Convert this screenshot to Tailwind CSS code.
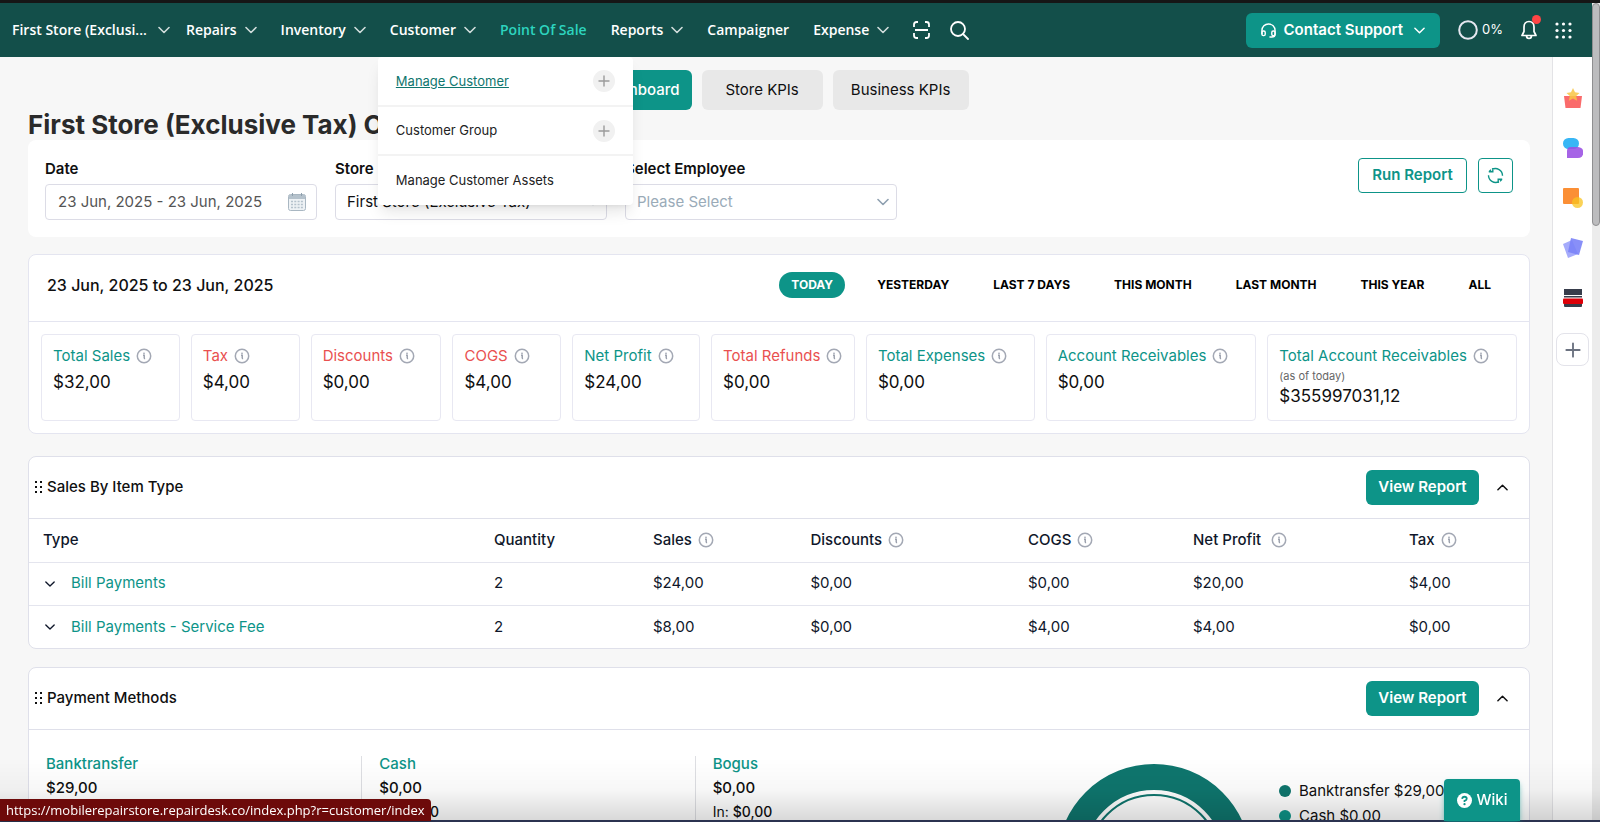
<!DOCTYPE html>
<html lang="en">
<head>
  <meta charset="UTF-8" />
  <meta name="viewport" content="width=device-width, initial-scale=1.0" />
  <title>RepairDesk Dashboard</title>
  <script src="https://cdn.jsdelivr.net/npm/@tailwindcss/browser@4"></script>
</head>
<body class="h-screen overflow-hidden bg-[#f7f7f7] font-['Inter',sans-serif] text-[15px] text-[#0f0f10]">
  <!-- shared icons -->
  <svg class="hidden">
    <symbol id="chev" viewBox="0 0 12 12"><path d="M1 3.5 6 8.5l5-5" fill="none" stroke="currentColor" stroke-width="1.6" stroke-linecap="round" stroke-linejoin="round" /></symbol>
    <symbol id="info" viewBox="0 0 16 16"><circle cx="8" cy="8" r="6.7" fill="none" stroke="#a3a8b4" stroke-width="1.5" /><path d="M7 7.2h1.2v3.4M8.2 10.6h.9" fill="none" stroke="#8f95a3" stroke-width="1.3" /><circle cx="8" cy="5.2" r=".8" fill="#8f95a3" /></symbol>
    <symbol id="plus" viewBox="0 0 12 12"><path d="M6 1v10M1 6h10" fill="none" stroke="currentColor" stroke-width="1.4" stroke-linecap="round" /></symbol>
    <symbol id="grip" viewBox="0 0 8 14"><g fill="#111"><rect x="0" y="0" width="2" height="2" /><rect x="5" y="0" width="2" height="2" /><rect x="0" y="5" width="2" height="2" /><rect x="5" y="5" width="2" height="2" /><rect x="0" y="10" width="2" height="2" /><rect x="5" y="10" width="2" height="2" /></g></symbol>
  </svg>

  <div class="flex h-screen flex-col border-t-3 border-[#161616]">
    <div class="flex min-h-0 flex-1">
      <div class="flex min-w-0 flex-1 flex-col">

        <!-- top bar -->
        <header class="relative z-20 flex h-[54px] shrink-0 items-center justify-between bg-[#134f4a] pr-5 pl-3 text-white">
          <nav class="flex items-center gap-6 font-['Open_Sans',sans-serif] text-sm font-semibold">
            <button class="flex w-[158px] items-center justify-between">First Store (Exclusi...<svg class="size-3 text-white/80"><use href="#chev" /></svg></button>
            <button class="-ml-2 flex items-center gap-2">Repairs<svg class="size-3 text-white/80"><use href="#chev" /></svg></button>
            <button class="flex items-center gap-2">Inventory<svg class="size-3 text-white/80"><use href="#chev" /></svg></button>
            <div class="relative">
              <button class="flex items-center gap-2">Customer<svg class="size-3 text-white/80"><use href="#chev" /></svg></button>
              <!-- customer menu -->
              <ul class="absolute top-[37px] -left-3 w-[255px] divide-y-2 divide-[#f3f3f3] rounded-sm bg-white font-['Inter',sans-serif] text-[13px] font-normal text-[#222] shadow-lg">
                <li class="flex h-[50px] items-center justify-between px-[18px]"><a href="#" class="text-[#0f766e] underline">Manage Customer</a><button aria-label="Add customer" class="flex size-[22px] items-center justify-center rounded-full bg-[#f1f1f1] text-[#9b9b9b]"><svg class="size-3"><use href="#plus" /></svg></button></li>
                <li class="flex h-[49px] items-center justify-between px-[18px]"><a href="#">Customer Group</a><button aria-label="Add customer group" class="flex size-[22px] items-center justify-center rounded-full bg-[#f1f1f1] text-[#9b9b9b]"><svg class="size-3"><use href="#plus" /></svg></button></li>
                <li class="flex h-[49px] items-center px-[18px]"><a href="#">Manage Customer Assets</a></li>
              </ul>
            </div>
            <a href="#" class="text-[#2dd4bf]">Point Of Sale</a>
            <button class="flex items-center gap-2">Reports<svg class="size-3 text-white/80"><use href="#chev" /></svg></button>
            <a href="#">Campaigner</a>
            <button class="flex items-center gap-2">Expense<svg class="size-3 text-white/80"><use href="#chev" /></svg></button>
            <div class="flex items-center gap-5">
              <button aria-label="Scan"><svg class="block h-[18px] w-[17px]" viewBox="0 0 17 18" fill="none" stroke="currentColor" stroke-width="1.8"><path d="M1 6V3.5Q1 1 3.5 1H5M12 1h1.5Q16 1 16 3.5V6M16 12v2.5Q16 17 13.5 17H12M5 17H3.5Q1 17 1 14.5V12M2 9h13" /></svg></button>
              <button aria-label="Search"><svg class="block size-[19px]" viewBox="0 0 19 19" fill="none" stroke="currentColor" stroke-width="1.8" stroke-linecap="round"><circle cx="8" cy="8" r="7" /><path d="m13 13 5 5" /></svg></button>
            </div>
          </nav>
          <div class="flex items-center gap-[18px]">
            <button class="flex h-[35px] items-center gap-2 rounded-md bg-[#0d9488] px-[15px] text-[15px] font-semibold">
              <svg class="size-[15px]" viewBox="0 0 16 16" fill="none" stroke="currentColor" stroke-width="1.5"><path d="M1 12V8a7 7 0 0 1 14 0v4q0 3-3.5 3H9" /><rect x="1" y="8.5" width="3.5" height="5" rx="1.5" /><rect x="11.5" y="8.5" width="3.5" height="5" rx="1.5" /></svg>
              Contact Support<svg class="ml-[3px] size-[11px]"><use href="#chev" /></svg>
            </button>
            <span class="flex items-center gap-1 text-[13px]"><svg class="size-5" viewBox="0 0 20 20"><circle cx="10" cy="10" r="8.8" fill="none" stroke="#e5e7f0" stroke-width="2" /></svg>0%</span>
            <button aria-label="Notifications" class="relative"><svg class="block h-5 w-4" viewBox="0 0 16 20" fill="none" stroke="currentColor" stroke-width="1.7" stroke-linejoin="round"><path d="M8 1.5C4.8 1.5 3 4 3 7v4.5L1 15.5h14l-2-4V7c0-3-1.8-5.5-5-5.500ZM5.500 15.500q0 3 2.500 3t2.500-3" /></svg><span class="absolute -top-[5px] -right-1 size-[9px] rounded-full bg-[#ff4545]"></span></button>
            <button aria-label="Apps"><svg class="block size-[17px]" viewBox="0 0 17 17" fill="#fff"><circle cx="2" cy="2" r="1.6" /><circle cx="8.5" cy="2" r="1.6" /><circle cx="15" cy="2" r="1.6" /><circle cx="2" cy="8.5" r="1.6" /><circle cx="8.5" cy="8.5" r="1.6" /><circle cx="15" cy="8.5" r="1.6" /><circle cx="2" cy="15" r="1.6" /><circle cx="8.5" cy="15" r="1.6" /><circle cx="15" cy="15" r="1.6" /></svg></button>
          </div>
        </header>

        <div class="flex min-h-0 flex-1">
          <main class="min-w-0 flex-1 overflow-hidden pt-[13px] pr-[22px] pl-7">
            <div class="flex h-10 justify-center gap-[10px] text-[15px]">
              <button class="rounded-md bg-[#0d9488] px-3 font-medium text-white">Dashboard</button>
              <button class="w-[121px] rounded-md bg-[#e8e8e8]">Store KPIs</button>
              <button class="w-[136px] rounded-md bg-[#e8e8e8]">Business KPIs</button>
            </div>
            <h1 class="text-[26px] leading-[30px] font-bold text-[#2a2a2a]">First Store (Exclusive Tax) Overview</h1>

            <!-- filters -->
            <form class="flex items-start justify-between rounded-lg bg-white px-[17px] pt-[18px] pb-[17px]">
              <div class="flex gap-[18px]">
                <div class="w-[272px]">
                  <label for="date" class="block leading-[22px] font-semibold">Date</label>
                  <div class="mt-1 flex h-9 items-center rounded-sm border border-[#dcdce6] pr-[10px] pl-3">
                    <input id="date" type="text" value="23 Jun, 2025 - 23 Jun, 2025" class="min-w-0 flex-1 text-[#555]" />
                    <svg class="size-[18px]" viewBox="0 0 18 18"><rect x=".5" y="1.5" width="17" height="16" rx="2" fill="#eef2f5" stroke="#a9b7c2" /><path d="M1 2h16v4H1z" fill="#b5c2cc" /><path d="M4.500 0v3M13.500 0v3" stroke="#8fa0ad" /><path d="M3 8.500h12M3 11.500h12M3 14.500h12" stroke="#b5c2cc" stroke-width="1.500" stroke-dasharray="2 1.300" /></svg>
                  </div>
                </div>
                <div class="w-[272px]">
                  <label for="store" class="block leading-[22px] font-semibold">Store</label>
                  <div class="relative mt-1">
                    <select id="store" class="h-9 w-full appearance-none rounded-sm border border-[#dcdce6] px-[11px]"><option>First Store (Exclusive Tax)</option></select>
                    <svg class="pointer-events-none absolute top-3 right-2 size-3 text-[#8fa0b0]"><use href="#chev" /></svg>
                  </div>
                </div>
                <div class="w-[272px]">
                  <label for="employee" class="block leading-[22px] font-semibold">Select Employee</label>
                  <div class="relative mt-1">
                    <select id="employee" class="h-9 w-full appearance-none rounded-sm border border-[#dcdce6] px-[11px] text-[#9aabb8]"><option>Please Select</option></select>
                    <svg class="pointer-events-none absolute top-3 right-2 size-3 text-[#8fa0b0]"><use href="#chev" /></svg>
                  </div>
                </div>
              </div>
              <div class="flex gap-[11px] text-[#0d9488]">
                <button type="button" class="h-[35px] w-[109px] rounded-sm border border-[#0d9488] font-semibold">Run Report</button>
                <button type="button" aria-label="Refresh" class="flex size-[35px] items-center justify-center rounded-sm border border-[#0d9488]"><svg class="size-[17px]" viewBox="0 0 17 17" fill="none" stroke="currentColor" stroke-width="1.4"><path d="M1.500 5.500A7.500 7.500 0 0 1 1.500 5.500M5 2.300a7.200 7.200 0 0 1 10.500 6.500M12 14.700A7.200 7.200 0 0 1 1.500 8.200M1.800 4.800h4V1M15.200 12.200h-4V16M2 4.800l2-2M15 12.200l-2 2" /></svg></button>
              </div>
            </form>

            <!-- summary -->
            <section class="mt-[17px] rounded-lg border border-[#e4e5f0] bg-white">
              <div class="flex h-[67px] items-center justify-between border-b border-[#e4e5f0] pr-[26px] pb-[6px] pl-[18px]">
                <h2 class="text-base font-medium">23 Jun, 2025 to 23 Jun, 2025</h2>
                <div class="flex items-center gap-5 text-xs font-bold text-black">
                  <button class="h-[26px] rounded-full bg-[#0d9488] px-3 text-white">TODAY</button>
                  <button class="px-3">YESTERDAY</button>
                  <button class="px-3">LAST 7 DAYS</button>
                  <button class="px-3">THIS MONTH</button>
                  <button class="px-3">LAST MONTH</button>
                  <button class="px-3">THIS YEAR</button>
                  <button class="px-3">ALL</button>
                </div>
              </div>
              <div class="grid grid-cols-[139fr_109fr_131fr_109fr_128fr_144fr_169fr_211fr_250fr] gap-[11px] p-3 whitespace-nowrap text-[#0d9488]">
                <div class="h-[87px] rounded-sm border border-[#e8e8f2] px-[11px] pt-[10px]"><div class="flex items-center gap-[6px]">Total Sales<svg class="size-4"><use href="#info" /></svg></div><p class="text-[17px] leading-7 text-[#0f0f10]">$32,00</p></div>
                <div class="h-[87px] rounded-sm border border-[#e8e8f2] px-[11px] pt-[10px]"><div class="flex items-center gap-[6px] text-[#e95050]">Tax<svg class="size-4"><use href="#info" /></svg></div><p class="text-[17px] leading-7 text-[#0f0f10]">$4,00</p></div>
                <div class="h-[87px] rounded-sm border border-[#e8e8f2] px-[11px] pt-[10px]"><div class="flex items-center gap-[6px] text-[#e95050]">Discounts<svg class="size-4"><use href="#info" /></svg></div><p class="text-[17px] leading-7 text-[#0f0f10]">$0,00</p></div>
                <div class="h-[87px] rounded-sm border border-[#e8e8f2] px-[11px] pt-[10px]"><div class="flex items-center gap-[6px] text-[#e95050]">COGS<svg class="size-4"><use href="#info" /></svg></div><p class="text-[17px] leading-7 text-[#0f0f10]">$4,00</p></div>
                <div class="h-[87px] rounded-sm border border-[#e8e8f2] px-[11px] pt-[10px]"><div class="flex items-center gap-[6px]">Net Profit<svg class="size-4"><use href="#info" /></svg></div><p class="text-[17px] leading-7 text-[#0f0f10]">$24,00</p></div>
                <div class="h-[87px] rounded-sm border border-[#e8e8f2] px-[11px] pt-[10px]"><div class="flex items-center gap-[6px] text-[#e95050]">Total Refunds<svg class="size-4"><use href="#info" /></svg></div><p class="text-[17px] leading-7 text-[#0f0f10]">$0,00</p></div>
                <div class="h-[87px] rounded-sm border border-[#e8e8f2] px-[11px] pt-[10px]"><div class="flex items-center gap-[6px]">Total Expenses<svg class="size-4"><use href="#info" /></svg></div><p class="text-[17px] leading-7 text-[#0f0f10]">$0,00</p></div>
                <div class="h-[87px] rounded-sm border border-[#e8e8f2] px-[11px] pt-[10px]"><div class="flex items-center gap-[6px]">Account Receivables<svg class="size-4"><use href="#info" /></svg></div><p class="text-[17px] leading-7 text-[#0f0f10]">$0,00</p></div>
                <div class="h-[87px] rounded-sm border border-[#e8e8f2] px-[11px] pt-[10px]"><div class="flex items-center gap-[6px]">Total Account Receivables<svg class="size-4"><use href="#info" /></svg></div><p class="text-[11px] leading-4 text-[#666]">(as of today)</p><p class="text-[17px] leading-6 text-[#0f0f10]">$355997031,12</p></div>
              </div>
            </section>

            <!-- sales by item type -->
            <section class="mt-[22px] rounded-lg border border-[#dfe0ea] bg-white">
              <div class="flex h-[62px] items-center border-b border-[#dfe0ea] pr-[21px] pl-[6px]">
                <svg class="mr-1 h-[14px] w-2"><use href="#grip" /></svg>
                <h2 class="flex-1 font-medium">Sales By Item Type</h2>
                <button class="h-[35px] w-[113px] rounded-md bg-[#0d9488] font-semibold text-white">View Report</button>
                <button aria-label="Collapse" class="ml-[18px]"><svg class="block size-[11px] rotate-180"><use href="#chev" /></svg></button>
              </div>
              <table class="w-full table-fixed text-left text-[#0f172a]">
                <colgroup><col class="w-[30.2%]" /><col class="w-[10.6%]" /><col class="w-[10.5%]" /><col class="w-[14.5%]" /><col class="w-[11%]" /><col class="w-[14.4%]" /><col /></colgroup>
                <thead>
                  <tr class="h-[43px]">
                    <th class="pl-[14px] font-medium">Type</th>
                    <th class="pl-3 font-medium">Quantity</th>
                    <th class="pl-3 font-medium"><span class="flex items-center gap-[6px]">Sales<svg class="size-4"><use href="#info" /></svg></span></th>
                    <th class="pl-3 font-medium"><span class="flex items-center gap-[6px]">Discounts<svg class="size-4"><use href="#info" /></svg></span></th>
                    <th class="pl-3 font-medium"><span class="flex items-center gap-[6px]">COGS<svg class="size-4"><use href="#info" /></svg></span></th>
                    <th class="pl-3 font-medium"><span class="flex items-center gap-[10px]">Net Profit<svg class="size-4"><use href="#info" /></svg></span></th>
                    <th class="pl-3 font-medium"><span class="flex items-center gap-[6px]">Tax<svg class="size-4"><use href="#info" /></svg></span></th>
                  </tr>
                </thead>
                <tbody>
                  <tr class="h-[43px] border-t border-[#e4e5ee]">
                    <td class="pl-4"><span class="flex items-center gap-4"><button aria-label="Expand"><svg class="block size-[10px]"><use href="#chev" /></svg></button><a href="#" class="text-[#0d9488]">Bill Payments</a></span></td>
                    <td class="pl-3">2</td><td class="pl-3">$24,00</td><td class="pl-3">$0,00</td><td class="pl-3">$0,00</td><td class="pl-3">$20,00</td><td class="pl-3">$4,00</td>
                  </tr>
                  <tr class="h-[43px] border-t border-[#e4e5ee]">
                    <td class="pl-4"><span class="flex items-center gap-4"><button aria-label="Expand"><svg class="block size-[10px]"><use href="#chev" /></svg></button><a href="#" class="text-[#0d9488]">Bill Payments - Service Fee</a></span></td>
                    <td class="pl-3">2</td><td class="pl-3">$8,00</td><td class="pl-3">$0,00</td><td class="pl-3">$4,00</td><td class="pl-3">$4,00</td><td class="pl-3">$0,00</td>
                  </tr>
                </tbody>
              </table>
            </section>

            <!-- payment methods -->
            <section class="mt-[18px] rounded-lg border border-[#dfe0ea] bg-white">
              <div class="flex h-[62px] items-center border-b border-[#dfe0ea] pr-[21px] pl-[6px]">
                <svg class="mr-1 h-[14px] w-2"><use href="#grip" /></svg>
                <h2 class="flex-1 font-medium">Payment Methods</h2>
                <button class="h-[35px] w-[113px] rounded-md bg-[#0d9488] font-semibold text-white">View Report</button>
                <button aria-label="Collapse" class="ml-[18px]"><svg class="block size-[11px] rotate-180"><use href="#chev" /></svg></button>
              </div>
              <div class="grid grid-cols-[2fr_1fr] pt-[26px]">
                <div class="grid grid-cols-3 divide-x divide-[#dedfe3] leading-6">
                  <div class="h-[160px] pl-[17px]"><a href="#" class="-mt-1 block font-medium text-[#0d9488]">Banktransfer</a><p class="font-medium">$29,00</p><p class="text-sm leading-6">In: <span class="font-medium">$29,00</span></p></div>
                  <div class="h-[160px] pl-[17px]"><a href="#" class="-mt-1 block font-medium text-[#0d9488]">Cash</a><p class="font-medium">$0,00</p><p class="text-sm leading-6">In: <span class="font-medium">$0,00</span></p></div>
                  <div class="h-[160px] pl-[17px]"><a href="#" class="-mt-1 block font-medium text-[#0d9488]">Bogus</a><p class="font-medium">$0,00</p><p class="text-sm leading-6">In: <span class="font-medium">$0,00</span></p></div>
                </div>
                <div class="flex gap-[28px] pt-2 pl-7">
                  <svg class="size-[194px] shrink-0" viewBox="0 0 194 194" fill="none"><circle cx="97" cy="97" r="84" stroke="#0f766e" stroke-width="26" /><circle cx="97" cy="97" r="66" stroke="#0f766e" stroke-width="2" /></svg>
                  <ul class="pt-[14px] leading-[25px] whitespace-nowrap">
                    <li class="flex items-center gap-2"><span class="size-3 rounded-full bg-[#0f766e]"></span>Banktransfer $29,00</li>
                    <li class="flex items-center gap-2"><span class="size-3 rounded-full bg-[#0d9488]"></span>Cash $0,00</li>
                  </ul>
                </div>
              </div>
            </section>
          </main>

          <!-- app rail -->
          <aside class="flex w-10 shrink-0 flex-col items-center gap-[30px] border-l border-[#e3e3e6] bg-white pt-[31px]">
            <button aria-label="Rewards"><svg class="block size-5" viewBox="0 0 20 20"><path d="M1 8h18l-1.500 12h-15z" fill="#fa6b6b" /><path d="m10 0 2 4.300 4.500.6-3.300 3.200.9 4.700L10 10.500l-4.100 2.300.9-4.700-3.300-3.200L8 4.300z" fill="#f8c544" fill-opacity=".85" /></svg></button>
            <button aria-label="Chat"><svg class="block size-5" viewBox="0 0 20 20"><rect x="0" y="0" width="16" height="11" rx="5.5" fill="#38b6f5" /><path d="M4 20v-7q0-4 4-4h7a5.500 5.500 0 0 1 0 11z" fill="#9a4fe3" fill-opacity=".88" /></svg></button>
            <button aria-label="Notes"><svg class="block size-5" viewBox="0 0 20 20"><rect width="16" height="16" rx="1" fill="#fb8f35" /><circle cx="14.5" cy="14.5" r="5.5" fill="#f8c31f" fill-opacity=".75" /></svg></button>
            <button aria-label="Cards"><svg class="block size-5" viewBox="0 0 20 20"><path d="m0 6 9-4 6 14-10 4z" fill="#a5abfb" /><path d="m8 0 12 3-4 14-11-3z" fill="#7b83f7" fill-opacity=".9" /></svg></button>
            <button aria-label="Terminal"><svg class="block size-5" viewBox="0 0 20 20"><rect x="1" y="1" width="18" height="6" fill="#373d4b" /><rect x="1" y="8" width="18" height="1.5" fill="#373d4b" /><rect x="1" y="15" width="18" height="4" rx="1" fill="#373d4b" /><rect x="0" y="10.5" width="20" height="5.5" rx="1" fill="#dd0008" /></svg></button>
            <button aria-label="Add app" class="-mt-[5px] flex size-[33px] items-center justify-center rounded-lg border border-[#e3e3ea] text-[#6b7280]"><svg class="size-4"><use href="#plus" /></svg></button>
          </aside>
        </div>
      </div>

      <!-- page scrollbar -->
      <div class="w-2 shrink-0 bg-[#ececec]"><div class="h-[223px] rounded-full border border-[#8f8f91] bg-[#bcbcbe]"></div></div>
    </div>
  </div>

  <!-- bottom overlays -->
  <div class="pointer-events-none fixed inset-x-0 bottom-0 z-20 h-16 border-b-2 border-[#2b3350] bg-linear-to-b from-black/0 via-black/3 to-black/15"></div>
  <div class="fixed bottom-px left-0 z-30 rounded-tr-sm bg-[#6d0a0a] px-[6px] font-['Open_Sans',sans-serif] text-[13px] leading-[22px] font-medium text-white shadow-md">https://mobilerepairstore.repairdesk.co/index.php?r=customer/index</div>
  <button class="fixed right-20 bottom-px z-30 flex h-[42px] w-[76px] items-center justify-center gap-[5px] rounded-t-sm bg-[#0d9488] font-medium text-white shadow-md shadow-teal-600/50"><svg class="size-[15px]" viewBox="0 0 16 16"><circle cx="8" cy="8" r="8" fill="#fff" /><path d="M5.500 6.300Q5.700 4 8 4t2.400 2.100Q10.400 7.500 8 8.300V9.500" fill="none" stroke="#0d9488" stroke-width="1.9" /><circle cx="8" cy="11.9" r="1.2" fill="#0d9488" /></svg>Wiki</button>
</body>
</html>
